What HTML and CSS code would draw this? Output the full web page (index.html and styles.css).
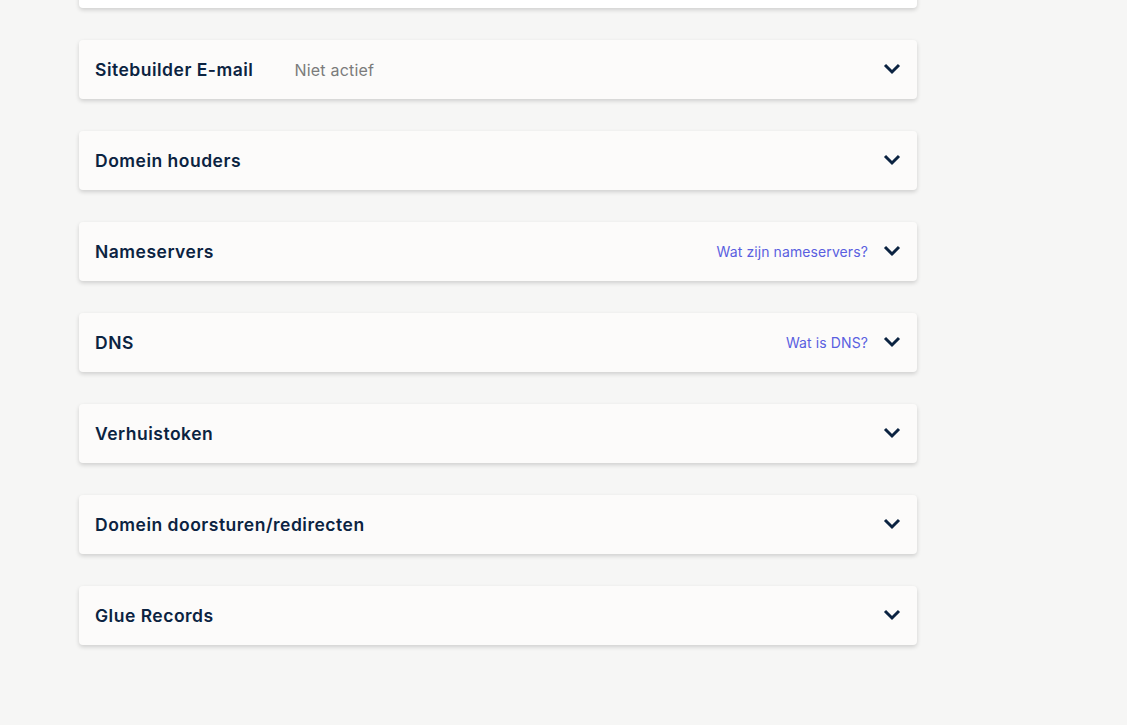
FILE: index.html
```html
<!DOCTYPE html>
<html lang="nl">
<head>
    <meta charset="UTF-8">
    <title>Domein beheer</title>
    <link rel="stylesheet" href="styles.css">
</head>
<body>
    <div class="panels">
        <div class="panel panel-cut"></div>
        <div class="panel">
            <div class="panel-title">Sitebuilder E-mail</div>
            <div class="panel-status">Niet actief</div>
            <svg class="chevron" viewBox="0 0 18 12"><path d="M2 2l7 7 7-7"/></svg>
        </div>
        <div class="panel">
            <div class="panel-title">Domein houders</div>
            <svg class="chevron" viewBox="0 0 18 12"><path d="M2 2l7 7 7-7"/></svg>
        </div>
        <div class="panel">
            <div class="panel-title">Nameservers</div>
            <a class="panel-help" href="#">Wat zijn nameservers?</a>
            <svg class="chevron" viewBox="0 0 18 12"><path d="M2 2l7 7 7-7"/></svg>
        </div>
        <div class="panel">
            <div class="panel-title">DNS</div>
            <a class="panel-help" href="#">Wat is DNS?</a>
            <svg class="chevron" viewBox="0 0 18 12"><path d="M2 2l7 7 7-7"/></svg>
        </div>
        <div class="panel">
            <div class="panel-title">Verhuistoken</div>
            <svg class="chevron" viewBox="0 0 18 12"><path d="M2 2l7 7 7-7"/></svg>
        </div>
        <div class="panel">
            <div class="panel-title">Domein doorsturen/redirecten</div>
            <svg class="chevron" viewBox="0 0 18 12"><path d="M2 2l7 7 7-7"/></svg>
        </div>
        <div class="panel">
            <div class="panel-title">Glue Records</div>
            <svg class="chevron" viewBox="0 0 18 12"><path d="M2 2l7 7 7-7"/></svg>
        </div>
    </div>
</body>
</html>
```

FILE: styles.css
```css
body {
    margin: 0;
    background: #f6f6f5;
    font-family: 'Inter', 'Noto Sans', sans-serif;
    color: #0b2341;
}
.panels {
    width: 838px;
    margin: -51px 0 0 79px;
    padding-bottom: 80px;
    display: flex;
    flex-direction: column;
    gap: 32px;
}
.panel {
    height: 59px;
    box-sizing: border-box;
    padding: 0 16px 0 16px;
    display: flex;
    align-items: center;
    background: #fcfbfa;
    border-radius: 4px;
    box-shadow: 0 2px 4px rgba(0, 0, 0, 0.16);
}
.panel-cut {
    background: #ffffff;
}
.panel-title {
    font-size: 17.5px;
    font-weight: 600;
    letter-spacing: 0.5px;
    margin-top: -1px;
}
.panel-status {
    margin-left: 41px;
    font-size: 16px;
    letter-spacing: 0.2px;
    color: #7b7b7b;
}
.panel-help {
    margin-left: auto;
    margin-right: 15px;
    font-size: 14px;
    letter-spacing: 0.1px;
    color: #5a5fe0;
    text-decoration: none;
}
.chevron {
    width: 18px;
    height: 12px;
    margin-left: auto;
    margin-top: -2px;
    fill: none;
    stroke: #0b2341;
    stroke-width: 3;
}
.panel-help + .chevron {
    margin-left: 0;
}
```
